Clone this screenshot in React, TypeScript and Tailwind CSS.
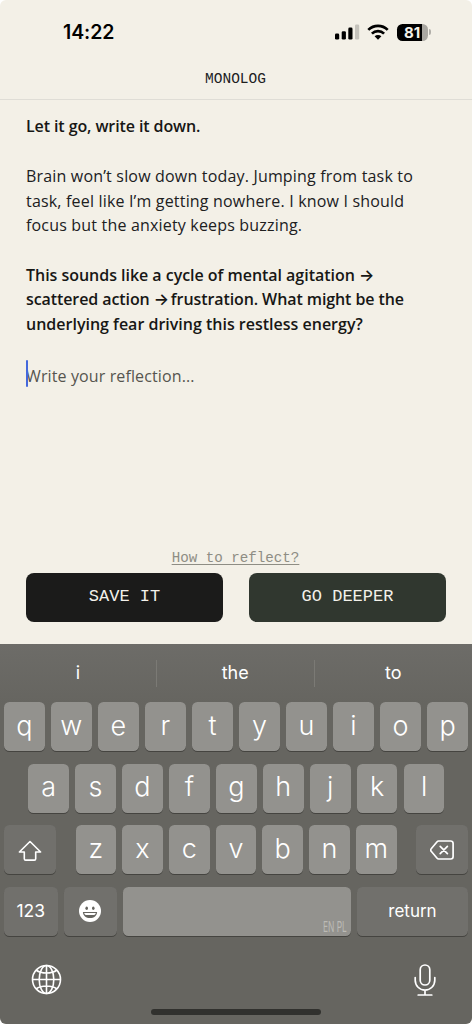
import React from 'react';

function Signal() {
  return (
    <svg width="25" height="17" viewBox="0 0 25 17">
      <rect x="0" y="9.6" width="4.2" height="6" rx="1.3" />
      <rect x="6.7" y="7.3" width="4.2" height="8.3" rx="1.3" />
      <rect x="13.3" y="3.6" width="4.2" height="12" rx="1.3" />
      <rect x="20" y="0.4" width="4.2" height="15.2" rx="1.3" fill="#c4c2bb" />
    </svg>
  );
}

function Wifi() {
  return (
    <svg width="22" height="16" viewBox="0 0 22 16" fill="none" stroke="#000" strokeWidth="2.7">
      <path d="M1.3 5.9a13.8 13.8 0 0 1 19.4 0" />
      <path d="M4.9 9.6a8.7 8.7 0 0 1 12.2 0" />
      <path d="M7.6 12.3a4.8 4.8 0 0 1 6.8 0L11 15.7z" fill="#000" stroke="none" />
    </svg>
  );
}

function Battery() {
  return (
    <div className="flex items-center">
      <div className="flex h-[17px] w-[31px] items-center justify-center rounded-[5.5px] bg-[linear-gradient(to_right,#000_25px,#a9a7a1_25px)] pt-[1px] pr-[1px] font-['Inter'] text-[15px] font-bold leading-none tracking-[-0.2px] text-[#f4f2e9]">
        81
      </div>
      <div className="ml-[1px] h-[6px] w-[2px] rounded-r-full bg-[#b1afa9]" />
    </div>
  );
}

const keyBase =
  "flex h-[49px] items-center justify-center rounded-[5.5px] text-white shadow-[0_1px_0_#454440]";

function Letter({ c }: { c: string }) {
  return (
    <div className={`${keyBase} w-[40.6px] bg-[#93928e] pb-[3px] text-[27px] font-light leading-none`}>
      {c}
    </div>
  );
}

function Special({ className, children }: { className: string; children: React.ReactNode }) {
  return <div className={`${keyBase} bg-[#71706c] ${className}`}>{children}</div>;
}

function Line({ className, children }: { className?: string; children: React.ReactNode }) {
  return (
    <div className="whitespace-nowrap">
      <span className={className}>{children}</span>
    </div>
  );
}

function Arrow() {
  return <span className="font-['Inter'] text-[16px] leading-none tracking-[-2.2px]">→</span>;
}

export default function App() {
  return (
    <div className="h-[1024px] w-[472px] overflow-hidden bg-white">
      <div className="flex h-full flex-col overflow-hidden rounded-[6px] bg-[#f3f0e7]">
        <header className="flex h-[100px] shrink-0 flex-col border-b border-[#dfddd6]">
          <div className="flex h-[64px] items-center pl-[63px] pr-[41px]">
            <div className="pt-[2px] font-['Inter'] text-[19.5px] font-semibold leading-none tracking-[-0.1px] text-black">14:22</div>
            <div className="ml-auto flex items-center">
              <Signal />
              <div className="ml-[7px]"><Wifi /></div>
              <div className="ml-[8px]"><Battery /></div>
            </div>
          </div>
          <h1 className="mt-[6px] pr-px text-center font-['Liberation_Mono'] text-[14.5px] leading-[18px] text-[#20201e]">MONOLOG</h1>
        </header>

        <main className="flex h-[440px] shrink-0 flex-col px-[26px] pt-[14px] font-['Open_Sans'] text-[16px] leading-[24.3px] tracking-[0.18px] text-[#20201e]">
          <Line className="font-semibold tracking-[-0.1px] text-[#171715]">Let it go, write it down.</Line>
          <div className="mt-[26px]">
            <Line>Brain won’t slow down today. Jumping from task to</Line>
            <Line>task, feel like I’m getting nowhere. I know I should</Line>
            <Line>focus but the anxiety keeps buzzing.</Line>
          </div>
          <div className="mt-[26px] font-semibold tracking-[0px] text-[#171715]">
            <Line className="tracking-[-0.03px]">This sounds like a cycle of mental agitation <Arrow /></Line>
            <Line className="tracking-[-0.09px]">scattered action <Arrow /> frustration. What might be the</Line>
            <Line>underlying fear driving this restless energy?</Line>
          </div>
          <div className="relative mt-[28px] text-[#56554f]">
            <Line className="tracking-[0.12px]">Write your reflection...</Line>
            <div className="absolute left-0 top-[-4px] h-[27px] w-[2px] rounded-full bg-[#4468dc]" />
          </div>
        </main>

        <section className="flex h-[104px] shrink-0 flex-col px-[26px] font-['Liberation_Mono']">
          <div className="mt-[9px] pr-px text-center text-[14.2px] leading-[18px] text-[#8e8d84] underline decoration-1 underline-offset-2">How to reflect?</div>
          <div className="mt-[6px] flex gap-[26px] text-[17px] text-[#f3f1ea]">
            <button className="h-[49px] flex-1 rounded-[8px] bg-[#1b1b1a] pb-[1px]">SAVE IT</button>
            <button className="h-[49px] flex-1 rounded-[8px] bg-[#30372f] pb-[1px]">GO DEEPER</button>
          </div>
        </section>

        <section className="flex flex-1 flex-col bg-[linear-gradient(#6d6c68,#666560_60px,#666560)] font-['Inter'] text-white">
          <div className="flex h-[58px] items-center text-[18px]">
            <div className="flex h-[27px] w-[157px] items-center justify-center border-r border-[#7b7a75] pb-[2px]">i</div>
            <div className="flex h-[27px] w-[157.5px] items-center justify-center border-r border-[#7b7a75] pb-[2px]">the</div>
            <div className="flex h-[27px] flex-1 items-center justify-center pb-[2px]">to</div>
          </div>
          <div className="flex flex-col gap-[12.6px] px-[4px]">
            <div className="flex justify-between">
              {'qwertyuiop'.split('').map((c) => <Letter key={c} c={c} />)}
            </div>
            <div className="flex justify-between pl-[24.3px] pr-[23.5px]">
              {'asdfghjkl'.split('').map((c) => <Letter key={c} c={c} />)}
            </div>
            <div className="flex justify-between">
              <Special className="w-[52px]">
                <svg width="24" height="22" viewBox="0 0 24 22" fill="none" stroke="#fff" strokeWidth="1.6" strokeLinejoin="round" className="mt-[2px]">
                  <path d="M12 1.5 1.4 12h4.9v6.7a1.4 1.4 0 0 0 1.4 1.4h8.6a1.4 1.4 0 0 0 1.4-1.4V12h4.9z" />
                </svg>
              </Special>
              <div className="flex w-[321px] justify-between">
                {'zxcvbnm'.split('').map((c) => <Letter key={c} c={c} />)}
              </div>
              <Special className="w-[52px]">
                <svg width="24" height="20" viewBox="0 0 24 20" fill="none" stroke="#fff" strokeWidth="1.7" strokeLinejoin="round" strokeLinecap="round" className="mt-px">
                  <path d="M8.6 1h12.1a2.4 2.4 0 0 1 2.4 2.4v13.2a2.4 2.4 0 0 1-2.4 2.4H8.6a2 2 0 0 1-1.5-.7L1.2 11.2a1.8 1.8 0 0 1 0-2.4l5.9-7.1A2 2 0 0 1 8.6 1z" />
                  <path d="m10.2 6.3 7.2 7.4m0-7.4-7.2 7.4" />
                </svg>
              </Special>
            </div>
            <div className="flex gap-[6px]">
              <Special className="w-[53.5px] text-[17.5px]">123</Special>
              <Special className="w-[53px]">
                <svg width="22" height="22" viewBox="0 0 22 22">
                  <circle cx="11" cy="11" r="11" fill="#fff" />
                  <ellipse cx="7.7" cy="8.2" rx="1.3" ry="1.7" fill="#666560" />
                  <ellipse cx="14.3" cy="8.2" rx="1.3" ry="1.7" fill="#666560" />
                  <path d="M3.9 12h14.2c0 3.8-3.2 6.1-7.1 6.1S3.9 15.8 3.9 12z" fill="#666560" />
                  <path d="M5.2 13h11.6c-.4 1.5-1.1 2-2.2 2H7.4c-1.1 0-1.8-.5-2.2-2z" fill="#fff" />
                </svg>
              </Special>
              <div className={`${keyBase} w-[228.5px] !items-end !justify-end bg-[#93928e] px-[4.5px] pb-[2px]`}>
                <span className="origin-right scale-x-[0.6] text-[14px] leading-[15px] text-[#bbbab5]">EN PL</span>
              </div>
              <Special className="flex-1 text-[17px]">return</Special>
            </div>
          </div>
          <div className="flex items-center justify-between pl-[31px] pr-[35px] pt-[27px]">
            <svg width="31" height="31" viewBox="0 0 31 31" fill="none" stroke="#fff" strokeWidth="1.6">
              <circle cx="15.5" cy="15.5" r="14" />
              <ellipse cx="15.5" cy="15.5" rx="7.3" ry="14" />
              <path d="M15.5 1.5v28M1.5 15.5h28M5 6c5.500 4 15.500 4 21 0M5 25c5.500-4 15.500-4 21 0" />
            </svg>
            <svg width="24" height="34" viewBox="0 0 24 34" fill="none" stroke="#fff" strokeWidth="1.7" strokeLinecap="round">
              <rect x="7.2" y="2" width="9.6" height="20" rx="4.8" />
              <path d="M2.2 14.5v2.8a9.8 9.8 0 0 0 19.6 0v-2.8M12 27.2V32M5.2 32h13.6" />
            </svg>
          </div>
          <div className="mb-[9px] ml-[151px] mt-auto h-[6px] w-[170px] rounded-full bg-[#31312e]" />
        </section>
      </div>
    </div>
  );
}
